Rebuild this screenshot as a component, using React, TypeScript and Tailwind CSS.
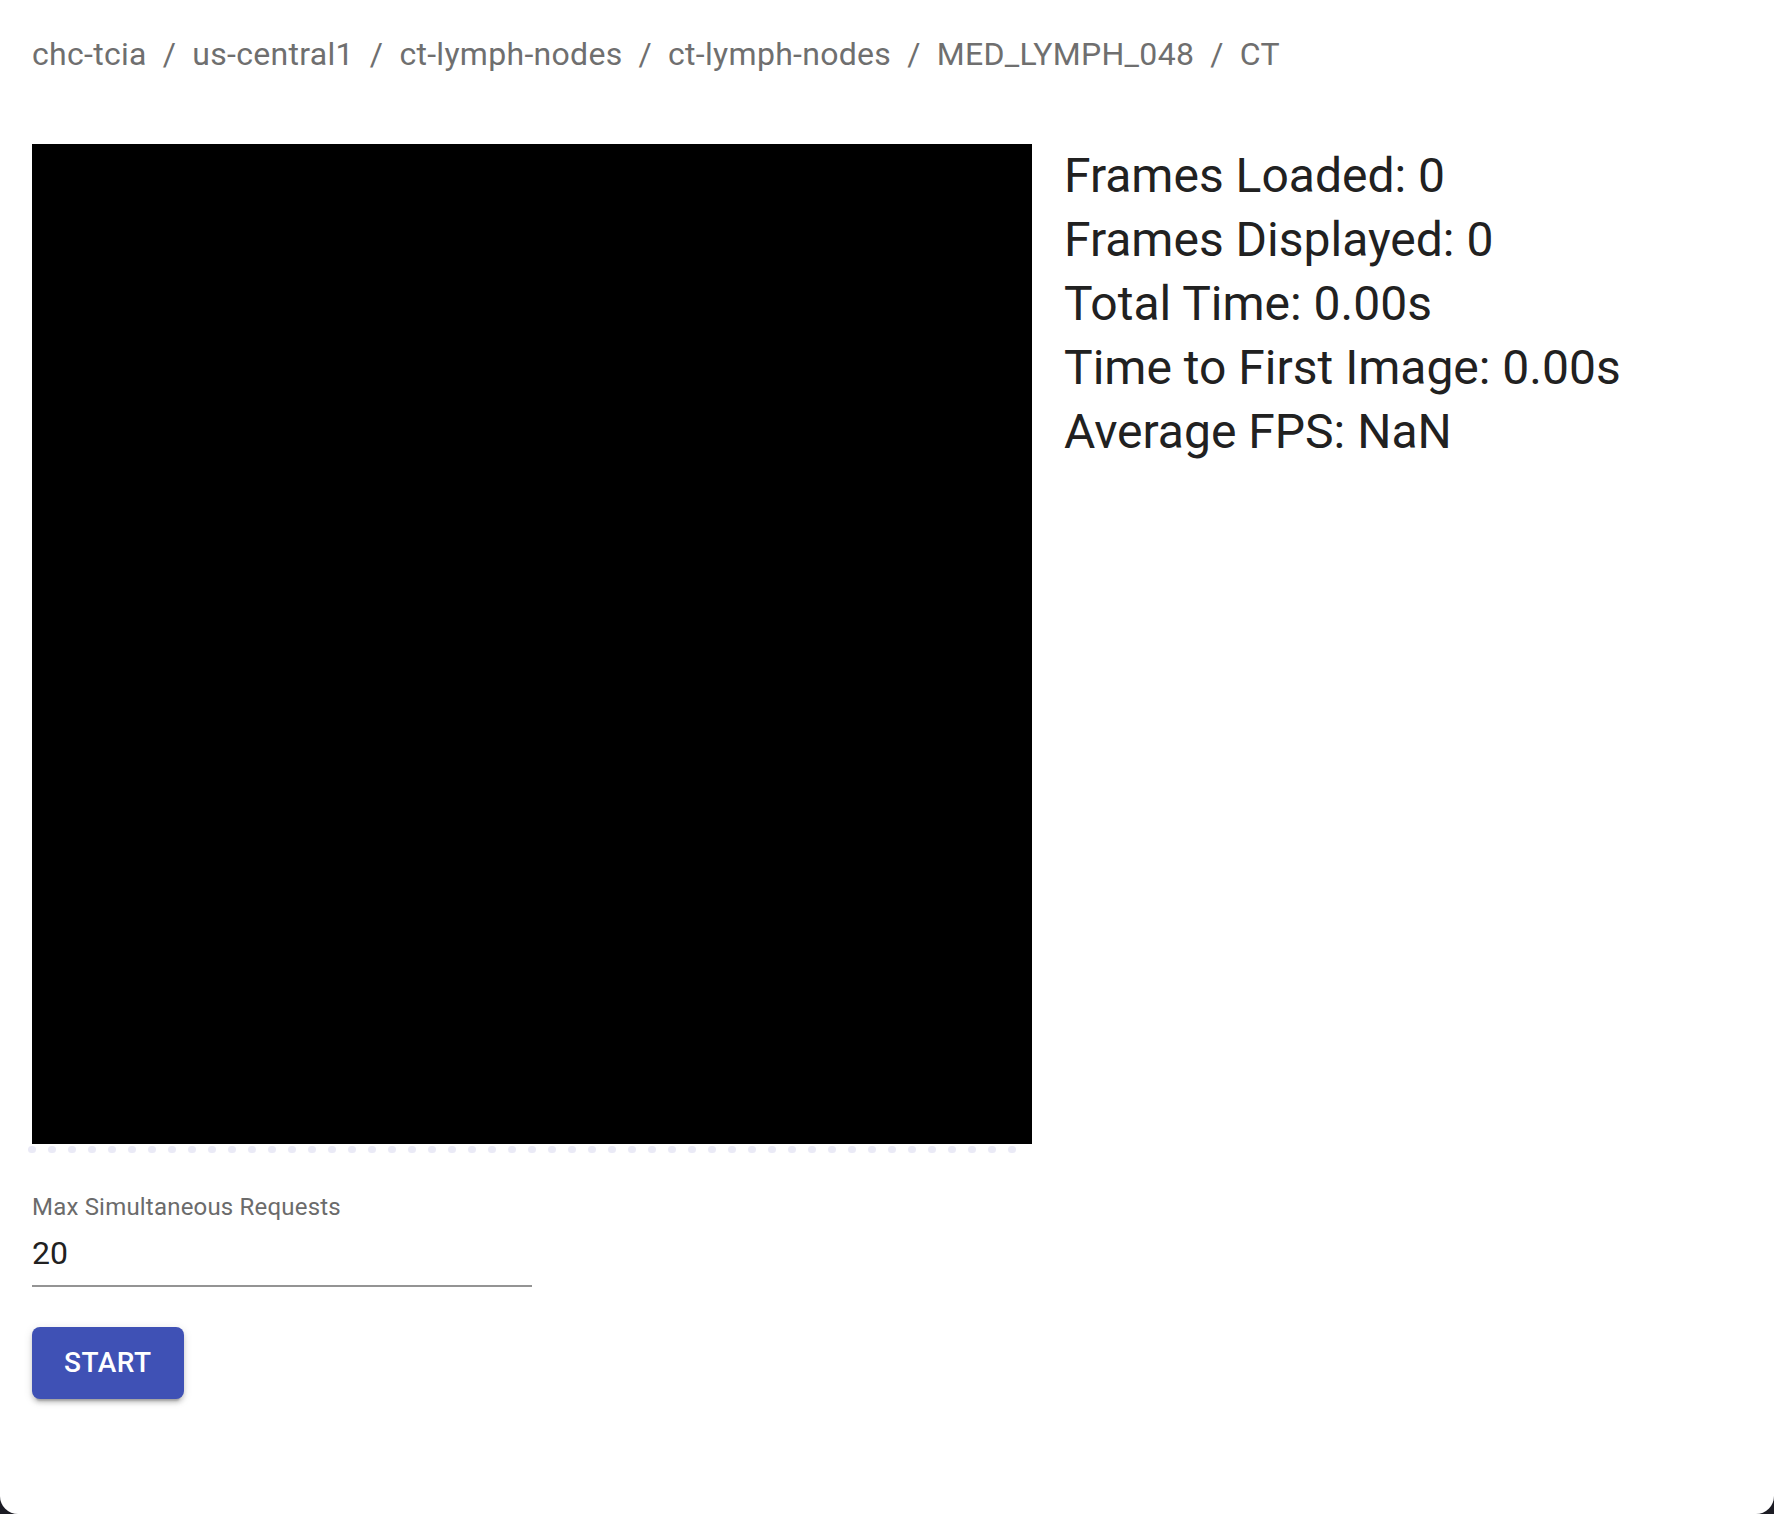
const crumbs = ['chc-tcia', 'us-central1', 'ct-lymph-nodes', 'ct-lymph-nodes', 'MED_LYMPH_048', 'CT'];

const stats = [
  'Frames Loaded: 0',
  'Frames Displayed: 0',
  'Total Time: 0.00s',
  'Time to First Image: 0.00s',
  'Average FPS: NaN',
];

function Breadcrumbs() {
  return (
    <nav className="flex items-center text-[32px] leading-[48px] tracking-[0.3px] text-[#6f6f6f]">
      {crumbs.map((c, i) => (
        <span key={i} className="flex items-center">
          {i > 0 && <span className="mx-4">/</span>}
          <span>{c}</span>
        </span>
      ))}
    </nav>
  );
}

function Viewer() {
  return (
    <div className="w-[1000px]">
      <div className="w-[1000px] h-[1000px] bg-black" />
      {/* dotted edge under the canvas */}
      <div className="flex gap-[12px] mt-[2px] -ml-[4px] overflow-hidden w-[1004px]">
        {Array.from({ length: 50 }).map((_, i) => (
          <div key={i} className="w-[8px] h-[7px] shrink-0 rounded-sm bg-[#eaeaf6]" />
        ))}
      </div>
    </div>
  );
}

export default function App() {
  return (
    <div className="h-[1514px] bg-[#1c1c24] font-['Roboto','Liberation_Sans',sans-serif]">
      <div className="h-[1514px] bg-white rounded-b-[18px] px-8 pt-[30px]">
        <Breadcrumbs />

        <div className="flex gap-8 mt-[66px]">
          <Viewer />
          <div className="text-[48px] leading-[64px] text-[#212121]">
            {stats.map((s) => (
              <div key={s}>{s}</div>
            ))}
          </div>
        </div>

        <div className="mt-[36px] w-[500px]">
          <label className="block text-[24px] leading-[36px] tracking-[0.2px] text-[#6b6b6b]">
            Max Simultaneous Requests
          </label>
          <div className="mt-[4px] pb-[8px] text-[32px] leading-[48px] text-[#212121] border-b-2 border-[#949494]">
            20
          </div>
        </div>

        <button className="mt-[40px] h-[72px] px-8 rounded-lg bg-[#3f51b5] text-white text-[28px] font-medium tracking-[0.5px] shadow-[0_6px_2px_-4px_rgba(0,0,0,0.2),0_4px_4px_0_rgba(0,0,0,0.14),0_2px_10px_0_rgba(0,0,0,0.12)]">
          START
        </button>
      </div>
    </div>
  );
}
